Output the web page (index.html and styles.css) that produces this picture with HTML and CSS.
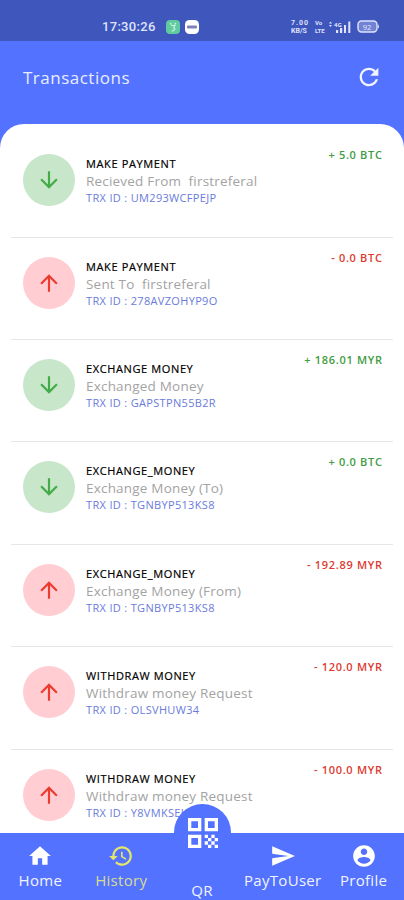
FILE: index.html
```html
<!DOCTYPE html>
<html lang="en">
<head>
<meta charset="utf-8">
<title>Transactions</title>
<link rel="stylesheet" href="styles.css">
</head>
<body>
<svg class="defs" width="0" height="0">
  <symbol id="down" viewBox="0 0 24 24"><path d="M20 12l-1.41-1.41L13 16.17V4h-2v12.17l-5.58-5.59L4 12l8 8 8-8z"/></symbol>
  <symbol id="up" viewBox="0 0 24 24"><path d="M4 12l1.41 1.41L11 7.83V20h2V7.83l5.58 5.59L20 12l-8-8-8 8z"/></symbol>
</svg>
<div class="screen">
  <div class="status">
    <span class="clock">17:30:26</span>
    <svg class="app" viewBox="0 0 14 14"><rect width="14" height="14" rx="4" fill="#5fcb9f"/><path d="M4 3l1.500 1.500M10 3L8.500 4.500M5 5.500h4L7.500 7.500 9 9 7 11H5.500" fill="none" stroke="#c4f2dc" stroke-width="1.200"/></svg>
    <svg class="app last" viewBox="0 0 14 14"><rect width="14" height="14" rx="4.500" fill="#fff"/><rect x="2" y="5.500" width="10" height="3" rx="1" fill="#7d82b8"/></svg>
    <span class="tiny rate"><b>7.00</b><b>KB/S</b></span>
    <span class="tiny volte"><b>Vo</b><b>LTE</b></span>
    <svg class="signal" viewBox="0 0 22 14"><g fill="#dfe4fb"><path d="M0 3.500L1.500 1.500 3 3.500zM0 5L1.500 7 3 5z"/><rect x="7" y="10" width="2.200" height="3"/><rect x="11" y="8" width="2.200" height="5"/><rect x="15" y="5" width="2" height="8"/><rect x="19.300" y="1.500" width="2" height="11.500"/></g><text x="5" y="6.500">4G</text></svg>
    <svg class="battery" viewBox="0 0 23 13"><rect x="1" y="1" width="19" height="11" rx="3.500" fill="#7283d4" stroke="#dfe4fb" stroke-width="1.400"/><path d="M21 4.200q2 2.300 0 4.600z" fill="#dfe4fb"/><text x="5.700" y="9.500">92</text></svg>
  </div>
  <header class="bar">
    <h1>Transactions</h1>
    <svg class="refresh" viewBox="0 0 24 24"><path d="M17.650 6.350C16.200 4.900 14.210 4 12 4c-4.420 0-7.990 3.580-7.990 8s3.570 8 7.990 8c3.730 0 6.840-2.550 7.730-6h-2.080c-.82 2.330-3.040 4-5.650 4-3.310 0-6-2.690-6-6s2.690-6 6-6c1.660 0 3.140.69 4.220 1.780L13 11h7V4l-2.350 2.350z"/></svg>
  </header>
  <main class="list">
    <article class="row in"><div class="disc"><svg><use href="#down"/></svg></div><div class="info"><p class="kind">MAKE PAYMENT</p><p class="note">Recieved From&nbsp; firstreferal</p><p class="trx">TRX ID : UM293WCFPEJP</p></div><p class="amount">+ 5.0 BTC</p></article>
    <article class="row out"><div class="disc"><svg><use href="#up"/></svg></div><div class="info"><p class="kind">MAKE PAYMENT</p><p class="note">Sent To&nbsp; firstreferal</p><p class="trx">TRX ID : 278AVZOHYP9O</p></div><p class="amount">- 0.0 BTC</p></article>
    <article class="row in"><div class="disc"><svg><use href="#down"/></svg></div><div class="info"><p class="kind">EXCHANGE MONEY</p><p class="note">Exchanged Money</p><p class="trx">TRX ID : GAPSTPN55B2R</p></div><p class="amount">+ 186.01 MYR</p></article>
    <article class="row in"><div class="disc"><svg><use href="#down"/></svg></div><div class="info"><p class="kind">EXCHANGE_MONEY</p><p class="note">Exchange Money (To)</p><p class="trx">TRX ID : TGNBYP513KS8</p></div><p class="amount">+ 0.0 BTC</p></article>
    <article class="row out"><div class="disc"><svg><use href="#up"/></svg></div><div class="info"><p class="kind">EXCHANGE_MONEY</p><p class="note">Exchange Money (From)</p><p class="trx">TRX ID : TGNBYP513KS8</p></div><p class="amount">- 192.89 MYR</p></article>
    <article class="row out"><div class="disc"><svg><use href="#up"/></svg></div><div class="info"><p class="kind">WITHDRAW MONEY</p><p class="note">Withdraw money Request</p><p class="trx">TRX ID : OLSVHUW34</p></div><p class="amount">- 120.0 MYR</p></article>
    <article class="row out"><div class="disc"><svg><use href="#up"/></svg></div><div class="info"><p class="kind">WITHDRAW MONEY</p><p class="note">Withdraw money Request</p><p class="trx">TRX ID : Y8VMKSEK</p></div><p class="amount">- 100.0 MYR</p></article>
  </main>
  <nav class="nav">
    <a class="item"><svg viewBox="0 0 24 24"><path d="M10 20v-6h4v6h5v-8h3L12 3 2 12h3v8z"/></svg><span>Home</span></a>
    <a class="item active"><svg viewBox="0 0 24 24"><path d="M13 3c-4.970 0-9 4.030-9 9H1l3.890 3.890.07.14L9 12H6c0-3.870 3.130-7 7-7s7 3.130 7 7-3.130 7-7 7c-1.930 0-3.680-.79-4.940-2.060l-1.420 1.420C8.270 19.990 10.510 21 13 21c4.970 0 9-4.030 9-9s-4.030-9-9-9zm-1 5v5l4.280 2.540.72-1.210-3.500-2.080V8H12z"/></svg><span>History</span></a>
    <a class="item qr"><span>QR</span></a>
    <a class="item"><svg viewBox="0 0 24 24"><path d="M2.010 21L23 12 2.010 3 2 10l15 2-15 2z"/></svg><span>PayToUser</span></a>
    <a class="item"><svg viewBox="0 0 24 24"><path d="M12 2C6.480 2 2 6.480 2 12s4.480 10 10 10 10-4.480 10-10S17.520 2 12 2zm0 3c1.660 0 3 1.340 3 3s-1.340 3-3 3-3-1.340-3-3 1.340-3 3-3zm0 14.200c-2.500 0-4.710-1.280-6-3.220.03-1.990 4-3.080 6-3.080 1.990 0 5.970 1.090 6 3.080-1.290 1.940-3.500 3.220-6 3.220z"/></svg><span>Profile</span></a>
    <div class="fab"><svg viewBox="0 0 18 18"><path fill-rule="evenodd" d="M0 8h8V0H0zm2-6h4v4H2zM0 18h8v-8H0zm2-6h4v4H2zM10 0v8h8V0zm6 6h-4V2h4zM16 16h2v2h-2zM10 10h2v2h-2zM12 12h2v2h-2zM10 14h2v2h-2zM12 16h2v2h-2zM14 14h2v2h-2zM14 10h2v2h-2zM16 12h2v2h-2z"/></svg></div>
  </nav>
</div>
</body>
</html>
```
FILE: styles.css
```css
* { box-sizing: border-box; }
body { margin: 0; font-family: "Open Sans", "Noto Sans", sans-serif; }
p, h1 { margin: 0; white-space: nowrap; }
.defs { display: block; position: absolute; }
.screen { width: 404px; height: 900px; display: flex; flex-direction: column; overflow: hidden; background: #5272ff; }

.status { height: 41px; flex: none; background: #3f56bd; display: flex; align-items: center; padding: 12px 24px 0 102px; color: #dfe4fb; }
.clock { font: 500 13px/16px Roboto, sans-serif; letter-spacing: 0.3px; width: 64px; white-space: nowrap; }
.app { width: 14px; height: 14px; margin-right: 5px; }
.app.last { margin-right: auto; }
.tiny { display: flex; flex-direction: column; font: 7px/8px Roboto, sans-serif; }
.rate { width: 19px; margin-right: 5px; }
.rate b:first-child { letter-spacing: 1px; }
.volte { width: 11px; margin-right: 3px; font-size: 6px; line-height: 7.500px; }
.signal { width: 22px; height: 14px; margin-right: 6px; }
.signal text { font-size: 6px; font-weight: 700; fill: #dfe4fb; }
.battery { width: 23px; height: 13px; }
.battery text { font-size: 7.500px; fill: #e7ebff; }

.bar { height: 83px; flex: none; display: flex; align-items: center; justify-content: space-between; padding: 0 23px 11px; color: #e9edff; }
.bar h1 { font-size: 17px; font-weight: 400; letter-spacing: 0.5px; }
.refresh { width: 28px; height: 28px; margin-right: -2px; fill: #f1f4ff; }

.list { flex: 1; min-height: 0; background: #fff; border-radius: 24px 24px 0 0; padding: 11.300px 11px 0; overflow: hidden; }
.row { height: 102.400px; display: flex; align-items: flex-start; padding: 13px 11px 0 12px; border-bottom: 1.500px solid #e6e6e6; }
.disc { width: 52px; height: 52px; margin-top: 6px; border-radius: 50%; display: flex; align-items: center; justify-content: center; flex: none; }
.disc svg { width: 26px; height: 26px; }
.in .disc { background: #c8e6c9; fill: #43ab48; }
.out .disc { background: #ffcdd2; fill: #ed3b30; }
.info { margin: 7px auto 0 11px; }
.kind { font-size: 11px; line-height: 17px; font-weight: 500; letter-spacing: 0.62px; color: #000; -webkit-text-stroke: 0.2px #000; }
.note { font-size: 13.500px; line-height: 18px; letter-spacing: 0.2px; color: #a3a3a3; }
.trx { font-size: 11px; line-height: 16px; letter-spacing: 0.33px; color: #6a7bdc; }
.amount { font-size: 11px; line-height: 13px; font-weight: 600; letter-spacing: 0.68px; margin-right: -0.6px; }
.in .amount { color: #3f9c43; }
.out .amount { color: #dd3b31; }

.nav { height: 67px; flex: none; position: relative; display: grid; grid-template-columns: repeat(5, 1fr); background: #5272ff; color: #f2f5ff; }
.item { display: flex; flex-direction: column; align-items: center; justify-content: flex-start; padding-top: 10px; fill: #fff; }
.item svg { width: 26px; height: 26px; }
.item span { font-size: 15px; line-height: 20px; margin-top: 1px; letter-spacing: 0.3px; }
.active { color: #d9dc91; fill: #e6e66a; }
.qr { padding-top: 46px; }
.fab { position: absolute; left: 174px; top: -29px; width: 57px; height: 57px; border-radius: 50%; background: #5272ff; display: flex; align-items: center; justify-content: center; }
.fab svg { width: 30px; height: 30px; fill: #fff; }
```
